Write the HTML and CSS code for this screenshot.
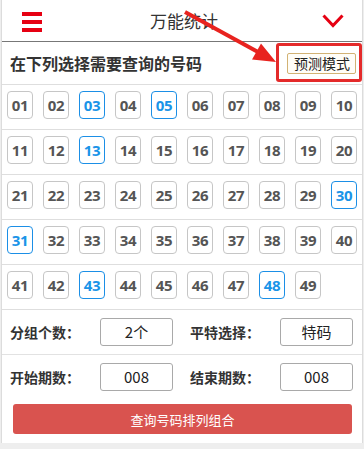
FILE: index.html
```html
<!DOCTYPE html>
<html lang="zh-CN">
<head>
  <meta charset="UTF-8">
  <title>万能统计</title>
  <link rel="stylesheet" href="styles.css">
</head>
<body>
  <div class="page">

    <!-- header -->
    <div class="topbar">
      <div class="menu-btn"><span></span><span></span><span></span></div>
      <div class="topbar-title">万能统计</div>
      <svg class="chevron" width="22" height="14" viewBox="0 0 22 14">
        <polyline points="1.5,1.5 11,11.5 20.5,1.5" fill="none" stroke="#e60012" stroke-width="3"/>
      </svg>
    </div>

    <!-- choose numbers -->
    <div class="pick-head">
      <span class="pick-title">在下列选择需要查询的号码</span>
      <button class="mode-btn">预测模式</button>
      <div class="mark-box"></div>
    </div>

    <div id="numbers"></div>

    <!-- options -->
    <div class="form-row">
      <span class="form-label">分组个数：</span>
      <div class="form-input">2个</div>
      <span class="form-label">平特选择：</span>
      <div class="form-input">特码</div>
    </div>
    <div class="form-row no-line">
      <span class="form-label">开始期数：</span>
      <div class="form-input">008</div>
      <span class="form-label">结束期数：</span>
      <div class="form-input">008</div>
    </div>
    <div class="submit-wrap">
      <button class="submit-btn">查询号码排列组合</button>
    </div>

    <!-- annotation arrow -->
    <svg class="arrow" width="364" height="90" viewBox="0 0 364 90">
      <line x1="185" y1="12" x2="258" y2="52" stroke="#e8231f" stroke-width="4"/>
      <polygon points="276,62 252,59.5 261,43.5" fill="#e8231f"/>
    </svg>
  </div>

  <script>
    const picked = [3, 5, 13, 30, 31, 43, 48];
    const box = document.getElementById('numbers');

    for (let r = 0; r < 5; r++) {
      const row = document.createElement('div');
      row.className = 'num-row';
      for (let c = 1; c <= 10; c++) {
        const n = r * 10 + c;
        if (n > 49) break;
        const cell = document.createElement('div');
        cell.className = 'num-cell';
        const ball = document.createElement('span');
        ball.className = picked.includes(n) ? 'num on' : 'num';
        ball.textContent = n < 10 ? '0' + n : n;
        cell.appendChild(ball);
        row.appendChild(cell);
      }
      box.appendChild(row);
    }
  </script>
</body>
</html>
```

FILE: styles.css
```css
body {
  margin: 0;
  background: #eeeeee;
  font-family: "Noto Sans CJK SC", "Noto Sans", sans-serif;
  color: #333;
}

.page {
  position: relative;
  margin: 0 1px;
  background: #fff;
  border-left: 1px solid #dcdcdc;
  border-right: 1px solid #dcdcdc;
}

.topbar {
  height: 41px;
  border-bottom: 1px solid #777;
  display: flex;
  align-items: center;
  justify-content: space-between;
  padding: 0 18px 0 20px;
}

.menu-btn {
  width: 20px;
  display: flex;
  flex-direction: column;
  gap: 4px;
  margin-top: 3px;
}

.menu-btn span {
  display: block;
  height: 4px;
  background: #e60012;
}

.topbar-title {
  font-size: 17px;
  color: #333;
  margin-left: 4px;
}

.chevron {
  display: block;
  margin-top: 1px;
}

.pick-head {
  position: relative;
  height: 42px;
  border-bottom: 1px solid #dedede;
  display: flex;
  align-items: center;
  justify-content: space-between;
  padding: 0 6px 0 8px;
}

.pick-title {
  font-size: 16px;
  font-weight: bold;
  color: #333;
}

.mode-btn {
  font-family: inherit;
  font-size: 14px;
  color: #222;
  height: 21px;
  padding: 0 5px 0 6px;
  line-height: 19px;
  background: #fffdf7;
  border: 1px solid #d2b274;
  border-radius: 2px;
  margin-top: 1px;
}

.mark-box {
  position: absolute;
  left: 274px;
  top: 1px;
  width: 80px;
  height: 33px;
  border: 3px solid #e42a2a;
  border-radius: 3px;
}

.num-row {
  height: 44px;
  border-bottom: 1px solid #dedede;
  display: grid;
  grid-template-columns: repeat(10, 36px);
}

.num-cell {
  display: flex;
  justify-content: center;
  padding-top: 6px;
}

.num {
  width: 24px;
  height: 26px;
  border: 1px solid #c6c6c6;
  border-radius: 4px;
  font-family: "Open Sans", "DejaVu Sans", sans-serif;
  font-weight: bold;
  font-size: 15px;
  color: #555;
  display: flex;
  align-items: center;
  justify-content: center;
  letter-spacing: -0.3px;
}

.num.on {
  border-color: #1b8fe6;
  color: #1a94e8;
}

.form-row {
  height: 44px;
  border-bottom: 1px solid #e2e2e2;
  display: flex;
  align-items: center;
  padding-left: 8px;
}

.form-row.no-line {
  border-bottom: none;
}

.form-label {
  flex: 0 0 90px;
  font-size: 14px;
  font-weight: bold;
  color: #333;
}

.form-input {
  flex: 0 0 71px;
  height: 26px;
  border: 1px solid #a9a9a9;
  border-radius: 3px;
  font-size: 15px;
  line-height: 26px;
  text-align: center;
  color: #222;
}

.form-input + .form-label {
  margin-left: 17px;
}

.submit-wrap {
  padding: 5px 10px 9px 11px;
}

.submit-btn {
  display: block;
  width: 100%;
  height: 30px;
  border: none;
  border-radius: 3px;
  background: #d9534f;
  color: #fff;
  font-family: inherit;
  font-size: 13px;
}

.arrow {
  position: absolute;
  left: -2px;
  top: 0;
  pointer-events: none;
}
```
